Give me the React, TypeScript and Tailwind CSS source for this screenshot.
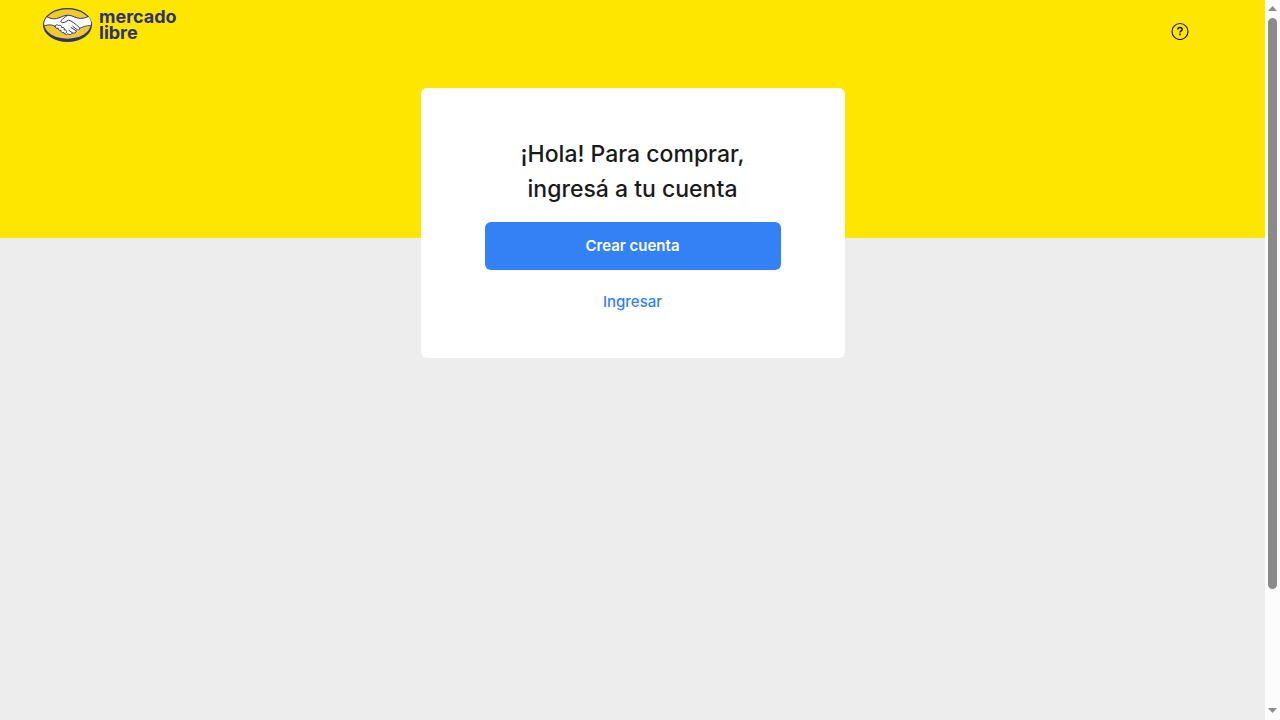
function HandshakeMark() {
  return (
    <svg viewBox="0 0 150 104" className="h-[34px] w-[49px]" aria-hidden="true">
      <ellipse cx="75" cy="52" rx="75" ry="52" fill="#2d3277" />
      <ellipse cx="75" cy="49" rx="71" ry="45" fill="#f0ca28" />
      <path
        d="M12 28C24 34 38 35 52 29C61 25 68 22 77 22C89 22 100 31 114 32C124 32 133 29 140 26C151 44 147 55 140 57C131 55 122 59 113 64C112 70 107 72 103 71C101 78 95 79 91 77C87 83 80 83 76 80C70 84 65 80 64 76C58 77 55 73 55 69C49 70 46 66 47 62C41 63 37 60 38 56C28 51 16 51 5 55C2 47 5 37 12 28Z"
        fill="#fff"
      />
      <g fill="none" stroke="#2d3277" strokeWidth="3" strokeLinecap="round" strokeLinejoin="round">
        <path d="M13 27C25 34 38 35 52 29C61 25 68 22 77 22C89 22 100 31 114 32C124 32 132 29 139 26" />
        <path d="M75 23C66 26 61 34 55 39C52 44 61 47 70 42L78 37C87 38 101 51 110 58C116 64 110 70 104 66L91 56" />
        <path d="M5 54C17 50 28 51 37 56C38 51 44 50 48 54C52 51 58 54 57 60C63 58 67 62 65 67C72 66 75 72 70 77" />
        <path d="M37 56C36 61 42 64 46 61C46 67 50 70 55 68C55 74 59 77 64 75C65 81 71 83 76 79C81 83 88 82 90 76C96 79 102 76 102 70" />
        <path d="M102 70L86 60M90 76L79 68M113 62C123 57 132 54 144 54" />
      </g>
    </svg>
  );
}

function HelpIcon() {
  return (
    <svg viewBox="0 0 18 18" className="size-[18px]" fill="none" stroke="#1a1a1a" aria-hidden="true">
      <circle cx="9" cy="9.500" r="8" strokeWidth="1.2" />
      <path d="M6.800 7.600C6.800 6.200 7.700 5.500 9 5.500S11.200 6.200 11.200 7.400C11.200 8.800 9 8.800 9 10.500" strokeWidth="1.5" />
      <path d="M9 11.600V13.200" strokeWidth="1.6" />
    </svg>
  );
}

function Scrollbar() {
  return (
    <div className="flex w-[15px] shrink-0 flex-col items-center bg-[#fcfcfc] pt-1.5 pb-[7px]" aria-hidden="true">
      <svg viewBox="0 0 9 5" className="h-[5px] w-[9px]" fill="#8b8b8b">
        <path d="M4.500 0L9 5H0Z" />
      </svg>
      <div className="flex w-[9px] grow flex-col pt-[7px] pb-0.5">
        <div className="h-[83%] rounded-full bg-[#8b8b8b]" />
      </div>
      <svg viewBox="0 0 9 5" className="h-[5px] w-[9px]" fill="#8b8b8b">
        <path d="M0 0H9L4.500 5Z" />
      </svg>
    </div>
  );
}

export default function App() {
  return (
    <div className="flex h-screen bg-[#ededed] font-['Inter','Liberation_Sans',sans-serif]">
      <div className="min-w-0 grow overflow-hidden">
        <header className="flex h-[238px] items-start justify-between bg-[#ffe600] pt-2 pr-[76px] pl-[43px]">
          <a href="#inicio" aria-label="mercado libre" className="flex items-center gap-[7px] text-[#2d3277]">
            <HandshakeMark />
            <span className="flex flex-col text-[18px] leading-[16px] font-bold">
              <span>mercado</span>
              <span>libre</span>
            </span>
          </a>
          <a href="#ayuda" aria-label="Ayuda" className="mt-[14px]">
            <HelpIcon />
          </a>
        </header>
        <main className="-mt-[150px] flex justify-center">
          <section className="flex w-[424px] flex-col items-center rounded-md bg-white px-16 pt-[49px] pb-8">
            <h1 className="text-center text-[23px] leading-[35px] font-medium text-[#1a1a1a]">
              ¡Hola! Para comprar,
              <br />
              ingresá a tu cuenta
            </h1>
            <button type="button" className="mt-[15px] h-12 w-full rounded-md bg-[#3480f5] text-[15px] font-semibold text-white">
              Crear cuenta
            </button>
            <a href="#ingresar" className="mt-2 flex h-12 w-full items-center justify-center text-[15px] font-medium text-[#3480f5]">
              Ingresar
            </a>
          </section>
        </main>
      </div>
      <Scrollbar />
    </div>
  );
}
